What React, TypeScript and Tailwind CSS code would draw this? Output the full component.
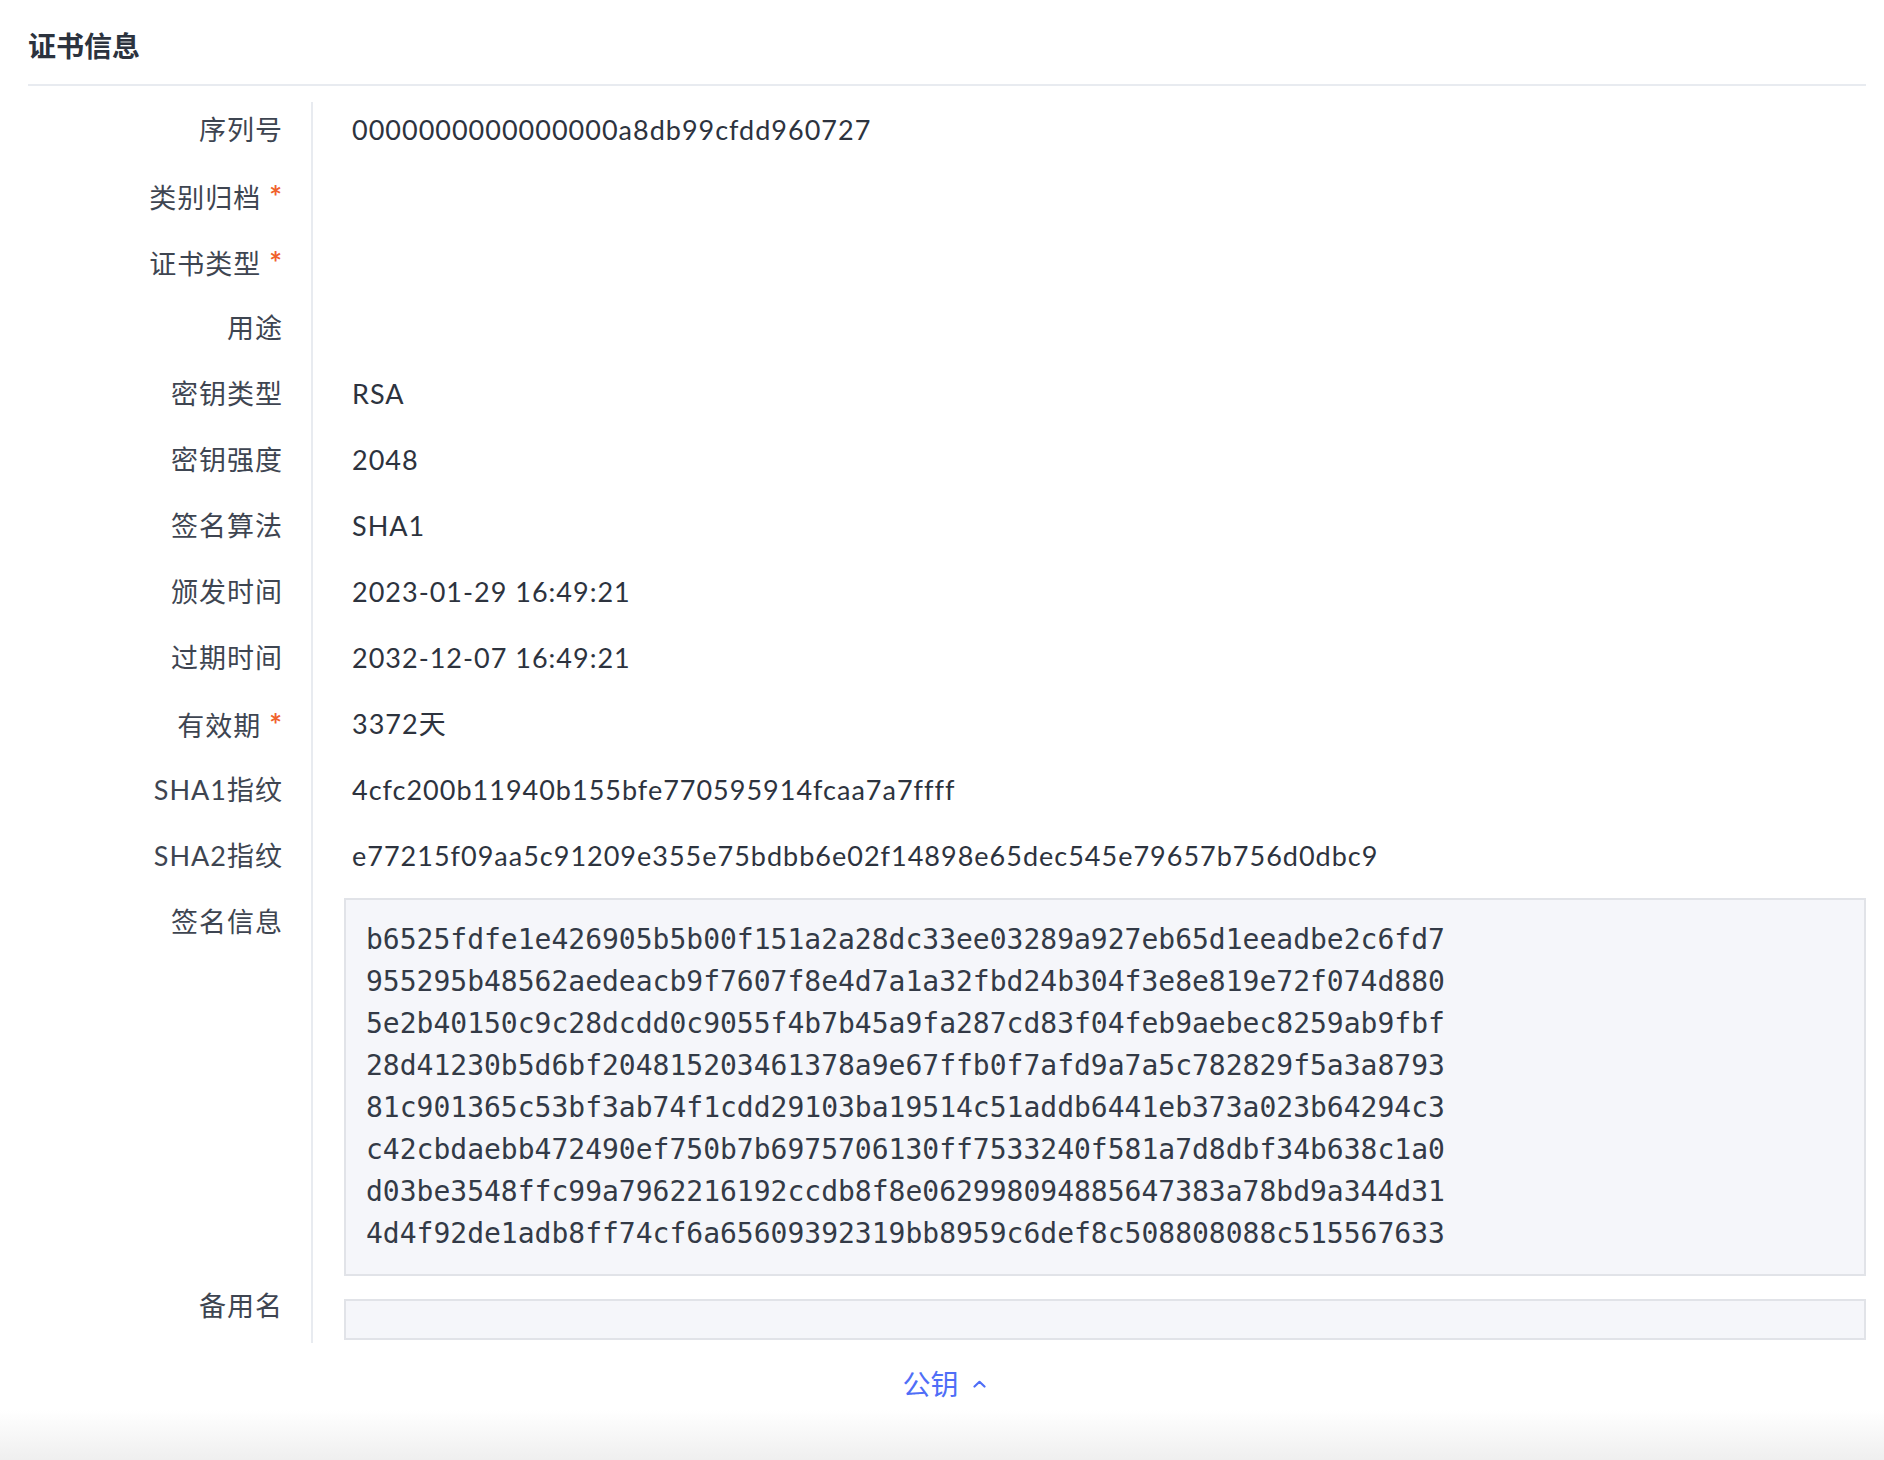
const rows: { label: string; value?: string; required?: boolean }[] = [
  { label: '序列号', value: '0000000000000000a8db99cfdd960727' },
  { label: '类别归档', required: true },
  { label: '证书类型', required: true },
  { label: '用途' },
  { label: '密钥类型', value: 'RSA' },
  { label: '密钥强度', value: '2048' },
  { label: '签名算法', value: 'SHA1' },
  { label: '颁发时间', value: '2023-01-29 16:49:21' },
  { label: '过期时间', value: '2032-12-07 16:49:21' },
  { label: '有效期', value: '3372天', required: true },
  { label: 'SHA1指纹', value: '4cfc200b11940b155bfe770595914fcaa7a7ffff' },
  { label: 'SHA2指纹', value: 'e77215f09aa5c91209e355e75bdbb6e02f14898e65dec545e79657b756d0dbc9' },
];

const signature = [
  'b6525fdfe1e426905b5b00f151a2a28dc33ee03289a927eb65d1eeadbe2c6fd7',
  '955295b48562aedeacb9f7607f8e4d7a1a32fbd24b304f3e8e819e72f074d880',
  '5e2b40150c9c28dcdd0c9055f4b7b45a9fa287cd83f04feb9aebec8259ab9fbf',
  '28d41230b5d6bf204815203461378a9e67ffb0f7afd9a7a5c782829f5a3a8793',
  '81c901365c53bf3ab74f1cdd29103ba19514c51addb6441eb373a023b64294c3',
  'c42cbdaebb472490ef750b7b6975706130ff7533240f581a7d8dbf34b638c1a0',
  'd03be3548ffc99a7962216192ccdb8f8e062998094885647383a78bd9a344d31',
  '4d4f92de1adb8ff74cf6a65609392319bb8959c6def8c508808088c515567633',
];

const Label = ({ text, required }: { text: string; required?: boolean }) => (
  <div className="w-[285px] shrink-0 pr-[28px] border-r-2 border-[#e8ebf0] text-right text-[#3e4551]">
    {text}
    {required && <span className="ml-[8px] text-[30px] font-bold text-[#f0622d]">*</span>}
  </div>
);

export default function App() {
  return (
    <div
      className="min-h-[1460px] bg-white flex flex-col text-[27px] tracking-[1px]"
      style={{ fontFamily: 'Lato, "Noto Sans CJK SC", sans-serif' }}
    >
      <div className="pl-[28px] pr-[18px]">
        {/* header */}
        <div className="pt-[26px] pb-[18px] border-b-2 border-[#e8ebf0]">
          <h2 className="text-[28px] leading-[40px] font-bold tracking-normal text-[#2c333e]">证书信息</h2>
        </div>

        {/* detail rows */}
        <div className="pt-[16px]">
          {rows.map((r) => (
            <div key={r.label} className="flex h-[66px] leading-[56px]">
              <Label text={r.label} required={r.required} />
              <div className="pl-[39px] text-[#2d333e] whitespace-nowrap">{r.value}</div>
            </div>
          ))}

          <div className="flex leading-[56px]">
            <Label text="签名信息" />
            <div className="flex-1 pl-[31px] pt-[4px] pb-[2px]">
              <div
                className="bg-[#f5f6fa] border-2 border-[#e1e3e8] px-[20px] py-[19px] text-[28px] leading-[42px] tracking-normal text-[#333a46]"
                style={{ fontFamily: '"DejaVu Sans Mono", monospace' }}
              >
                {signature.map((l) => (
                  <div key={l}>{l}</div>
                ))}
              </div>
            </div>
          </div>

          <div className="flex leading-[56px]">
            <Label text="备用名" />
            <div className="flex-1 pl-[31px] pt-[21px] pb-[3px]">
              <div className="h-[41px] bg-[#f5f6fa] border-2 border-[#e1e3e8]" />
            </div>
          </div>
        </div>

        {/* toggle */}
        <div className="mt-[21px] flex justify-center items-center gap-[14px] pr-[6px] text-[28px] leading-[40px] tracking-normal text-[#4f6ef7]">
          <span>公钥</span>
          <svg width="13" height="8" viewBox="0 0 13 8" fill="none">
            <path d="M1.5 6.5 6.5 1.8l5 4.7" stroke="#4f6ef7" strokeWidth="2.2" strokeLinecap="round" strokeLinejoin="round" />
          </svg>
        </div>
      </div>

      <div className="flex-1" />
      <div className="h-[50px] bg-gradient-to-b from-white to-[#efefef]" />
    </div>
  );
}
